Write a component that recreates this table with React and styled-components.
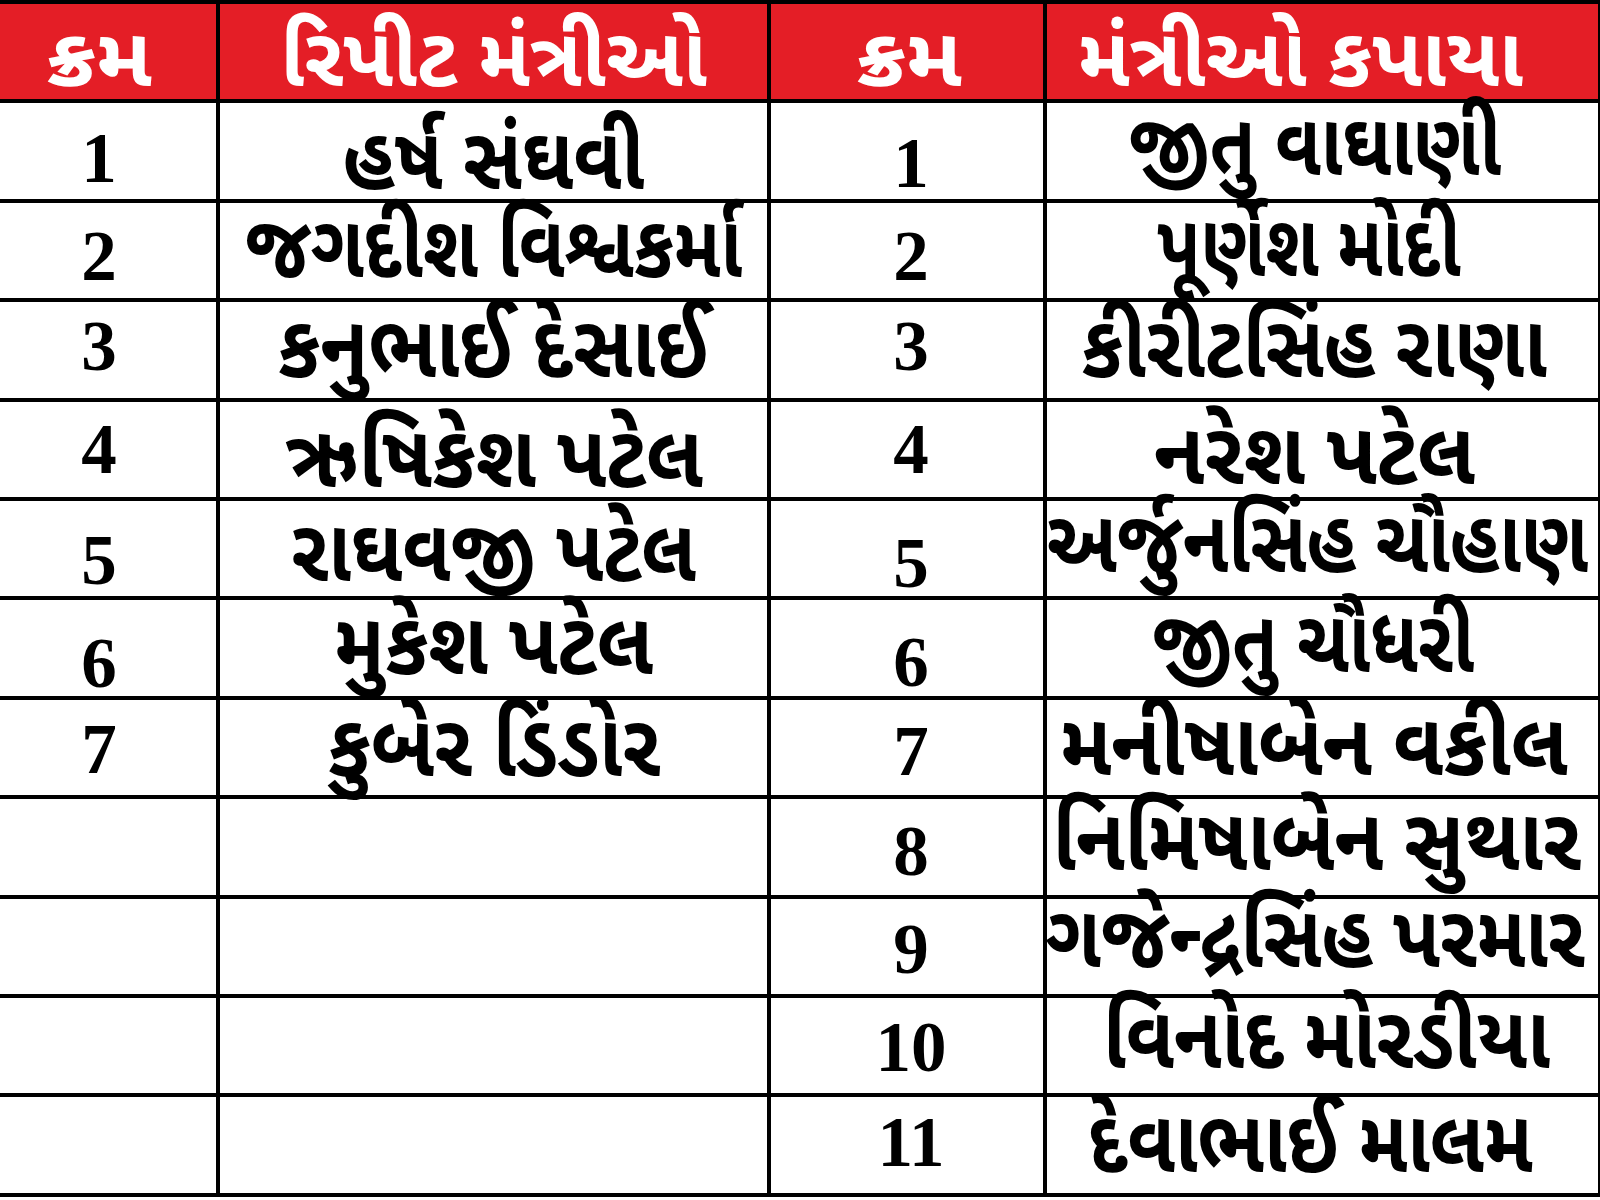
import React from 'react';
import styled, { createGlobalStyle } from 'styled-components';

const GlobalStyle = createGlobalStyle`
  html, body {
    margin: 0;
    padding: 0;
    background: #ffffff;
  }
`;

// sx: horizontal squeeze, dx/dy: nudge of the name, ndy: nudge of the number
const repeated = [
  { name: 'હર્ષ સંઘવી', sx: 1, dx: 0, dy: 21, ndy: 7 },
  { name: 'જગદીશ વિશ્વકર્મા', sx: 0.95, dx: 0, dy: 10, ndy: 6 },
  { name: 'કનુભાઈ દેસાઈ', sx: 1.01, dx: 0, dy: 10, ndy: -3 },
  { name: 'ઋષિકેશ પટેલ', sx: 1.04, dx: 0, dy: 21, ndy: 0 },
  { name: 'રાઘવજી પટેલ', sx: 1, dx: 0, dy: 15, ndy: 12 },
  { name: 'મુકેશ પટેલ', sx: 1.03, dx: 0, dy: 9, ndy: 15 },
  { name: 'કુબેર ડિંડોર', sx: 1.02, dx: 0, dy: 12, ndy: 2 },
];

const dropped = [
  { name: 'જીતુ વાઘાણી', sx: 0.95, dx: -7, dy: 7, ndy: 12 },
  { name: 'પૂર્ણેશ મોદી', sx: 0.92, dx: -14, dy: 9, ndy: 6 },
  { name: 'કીરીટસિંહ રાણા', sx: 0.99, dx: -8, dy: 10, ndy: -3 },
  { name: 'નરેશ પટેલ', sx: 1.06, dx: -8, dy: 18, ndy: 0 },
  { name: 'અર્જુનસિંહ ચૌહાણ', sx: 0.955, dx: -5, dy: 6, ndy: 15 },
  { name: 'જીતુ ચૌધરી', sx: 0.94, dx: -9, dy: 7, ndy: 14 },
  { name: 'મનીષાબેન વકીલ', sx: 1.04, dx: -9, dy: 11, ndy: 4 },
  { name: 'નિમિષાબેન સુથાર', sx: 1.025, dx: -6, dy: 6, ndy: 5 },
  { name: 'ગજેન્દ્રસિંહ પરમાર', sx: 0.99, dx: -7, dy: 4, ndy: 3 },
  { name: 'વિનોદ મોરડીયા', sx: 1, dx: 4, dy: 5, ndy: 2 },
  { name: 'દેવાભાઈ માલમ', sx: 0.99, dx: -12, dy: 10, ndy: -2 },
];

const Page = styled.div`
  width: 1600px;
  height: 1200px;
  overflow: hidden;
  background: #ffffff;
`;

const Table = styled.table`
  width: 1600px;
  border-collapse: collapse;
  table-layout: fixed;
  border-top: 4px solid #000;
`;

const Col = styled.col`
  width: ${(p) => p.$w}px;
`;

const HeadCell = styled.th`
  height: 95.4px;
  padding: 0;
  background: #e41e26;
  color: #ffffff;
  font-family: 'Noto Sans Gujarati', 'Noto Sans', 'DejaVu Sans', sans-serif;
  font-size: 82px;
  font-weight: 700;
  text-align: center;
  vertical-align: middle;
  border-right: 4px solid #000;
  border-bottom: 4px solid #000;
  white-space: nowrap;
  line-height: 1;
`;

const HeadText = styled.span`
  display: inline-block;
  transform: translate(${(p) => p.$dx || 0}px, 14px) scaleX(${(p) => p.$sx || 1});
`;

const NumCell = styled.td`
  height: 95.4px;
  padding: 0;
  font-family: 'Liberation Serif', 'Times New Roman', serif;
  font-size: 71px;
  font-weight: 700;
  color: #000;
  text-align: center;
  vertical-align: middle;
  border-right: 4px solid #000;
  border-bottom: 4px solid #000;
  line-height: 1;
`;

const NumText = styled.span`
  display: inline-block;
  transform: translate(${(p) => p.$dx}px, ${(p) => p.$dy}px);
`;

const NameCell = styled.td`
  height: 95.4px;
  padding: 0;
  font-family: 'Noto Sans Gujarati', 'Noto Sans', 'DejaVu Sans', sans-serif;
  font-size: 78px;
  font-weight: 700;
  color: #000;
  vertical-align: middle;
  border-right: 4px solid #000;
  border-bottom: 4px solid #000;
  white-space: nowrap;
  line-height: 1;
`;

const NameRow = styled.div`
  display: flex;
  justify-content: center;
  width: 100%;
`;

const NameText = styled.span`
  display: inline-block;
  flex: none;
  position: relative;
  z-index: 1;
  transform: translate(${(p) => p.$dx}px, ${(p) => p.$dy - 4}px) scale(${(p) => p.$sx}, 1.12);
`;

export default function App() {
  const rows = dropped.map((d, i) => ({ left: repeated[i], right: d, n: i + 1 }));

  return (
    <Page>
      <GlobalStyle />
      <Table>
        <colgroup>
          <Col $w={218} />
          <Col $w={551} />
          <Col $w={276} />
          <Col $w={555} />
        </colgroup>
        <thead>
          <tr>
            <HeadCell>
              <HeadText $sx={1.08} $dx={-9}>ક્રમ</HeadText>
            </HeadCell>
            <HeadCell>
              <HeadText>રિપીટ મંત્રીઓ</HeadText>
            </HeadCell>
            <HeadCell>
              <HeadText $sx={1.08} $dx={2}>ક્રમ</HeadText>
            </HeadCell>
            <HeadCell>
              <HeadText $dx={-22}>મંત્રીઓ કપાયા</HeadText>
            </HeadCell>
          </tr>
        </thead>
        <tbody>
          {rows.map(({ left, right, n }) => (
            <tr key={n}>
              <NumCell>
                {left && (
                  <NumText $dx={-9} $dy={left.ndy}>
                    {n}
                  </NumText>
                )}
              </NumCell>
              <NameCell>
                {left && (
                  <NameRow>
                    <NameText $sx={left.sx} $dx={left.dx} $dy={left.dy}>
                      {left.name}
                    </NameText>
                  </NameRow>
                )}
              </NameCell>
              <NumCell>
                <NumText $dx={4} $dy={right.ndy}>
                  {n}
                </NumText>
              </NumCell>
              <NameCell>
                <NameRow>
                  <NameText $sx={right.sx} $dx={right.dx} $dy={right.dy}>
                    {right.name}
                  </NameText>
                </NameRow>
              </NameCell>
            </tr>
          ))}
        </tbody>
      </Table>
    </Page>
  );
}
